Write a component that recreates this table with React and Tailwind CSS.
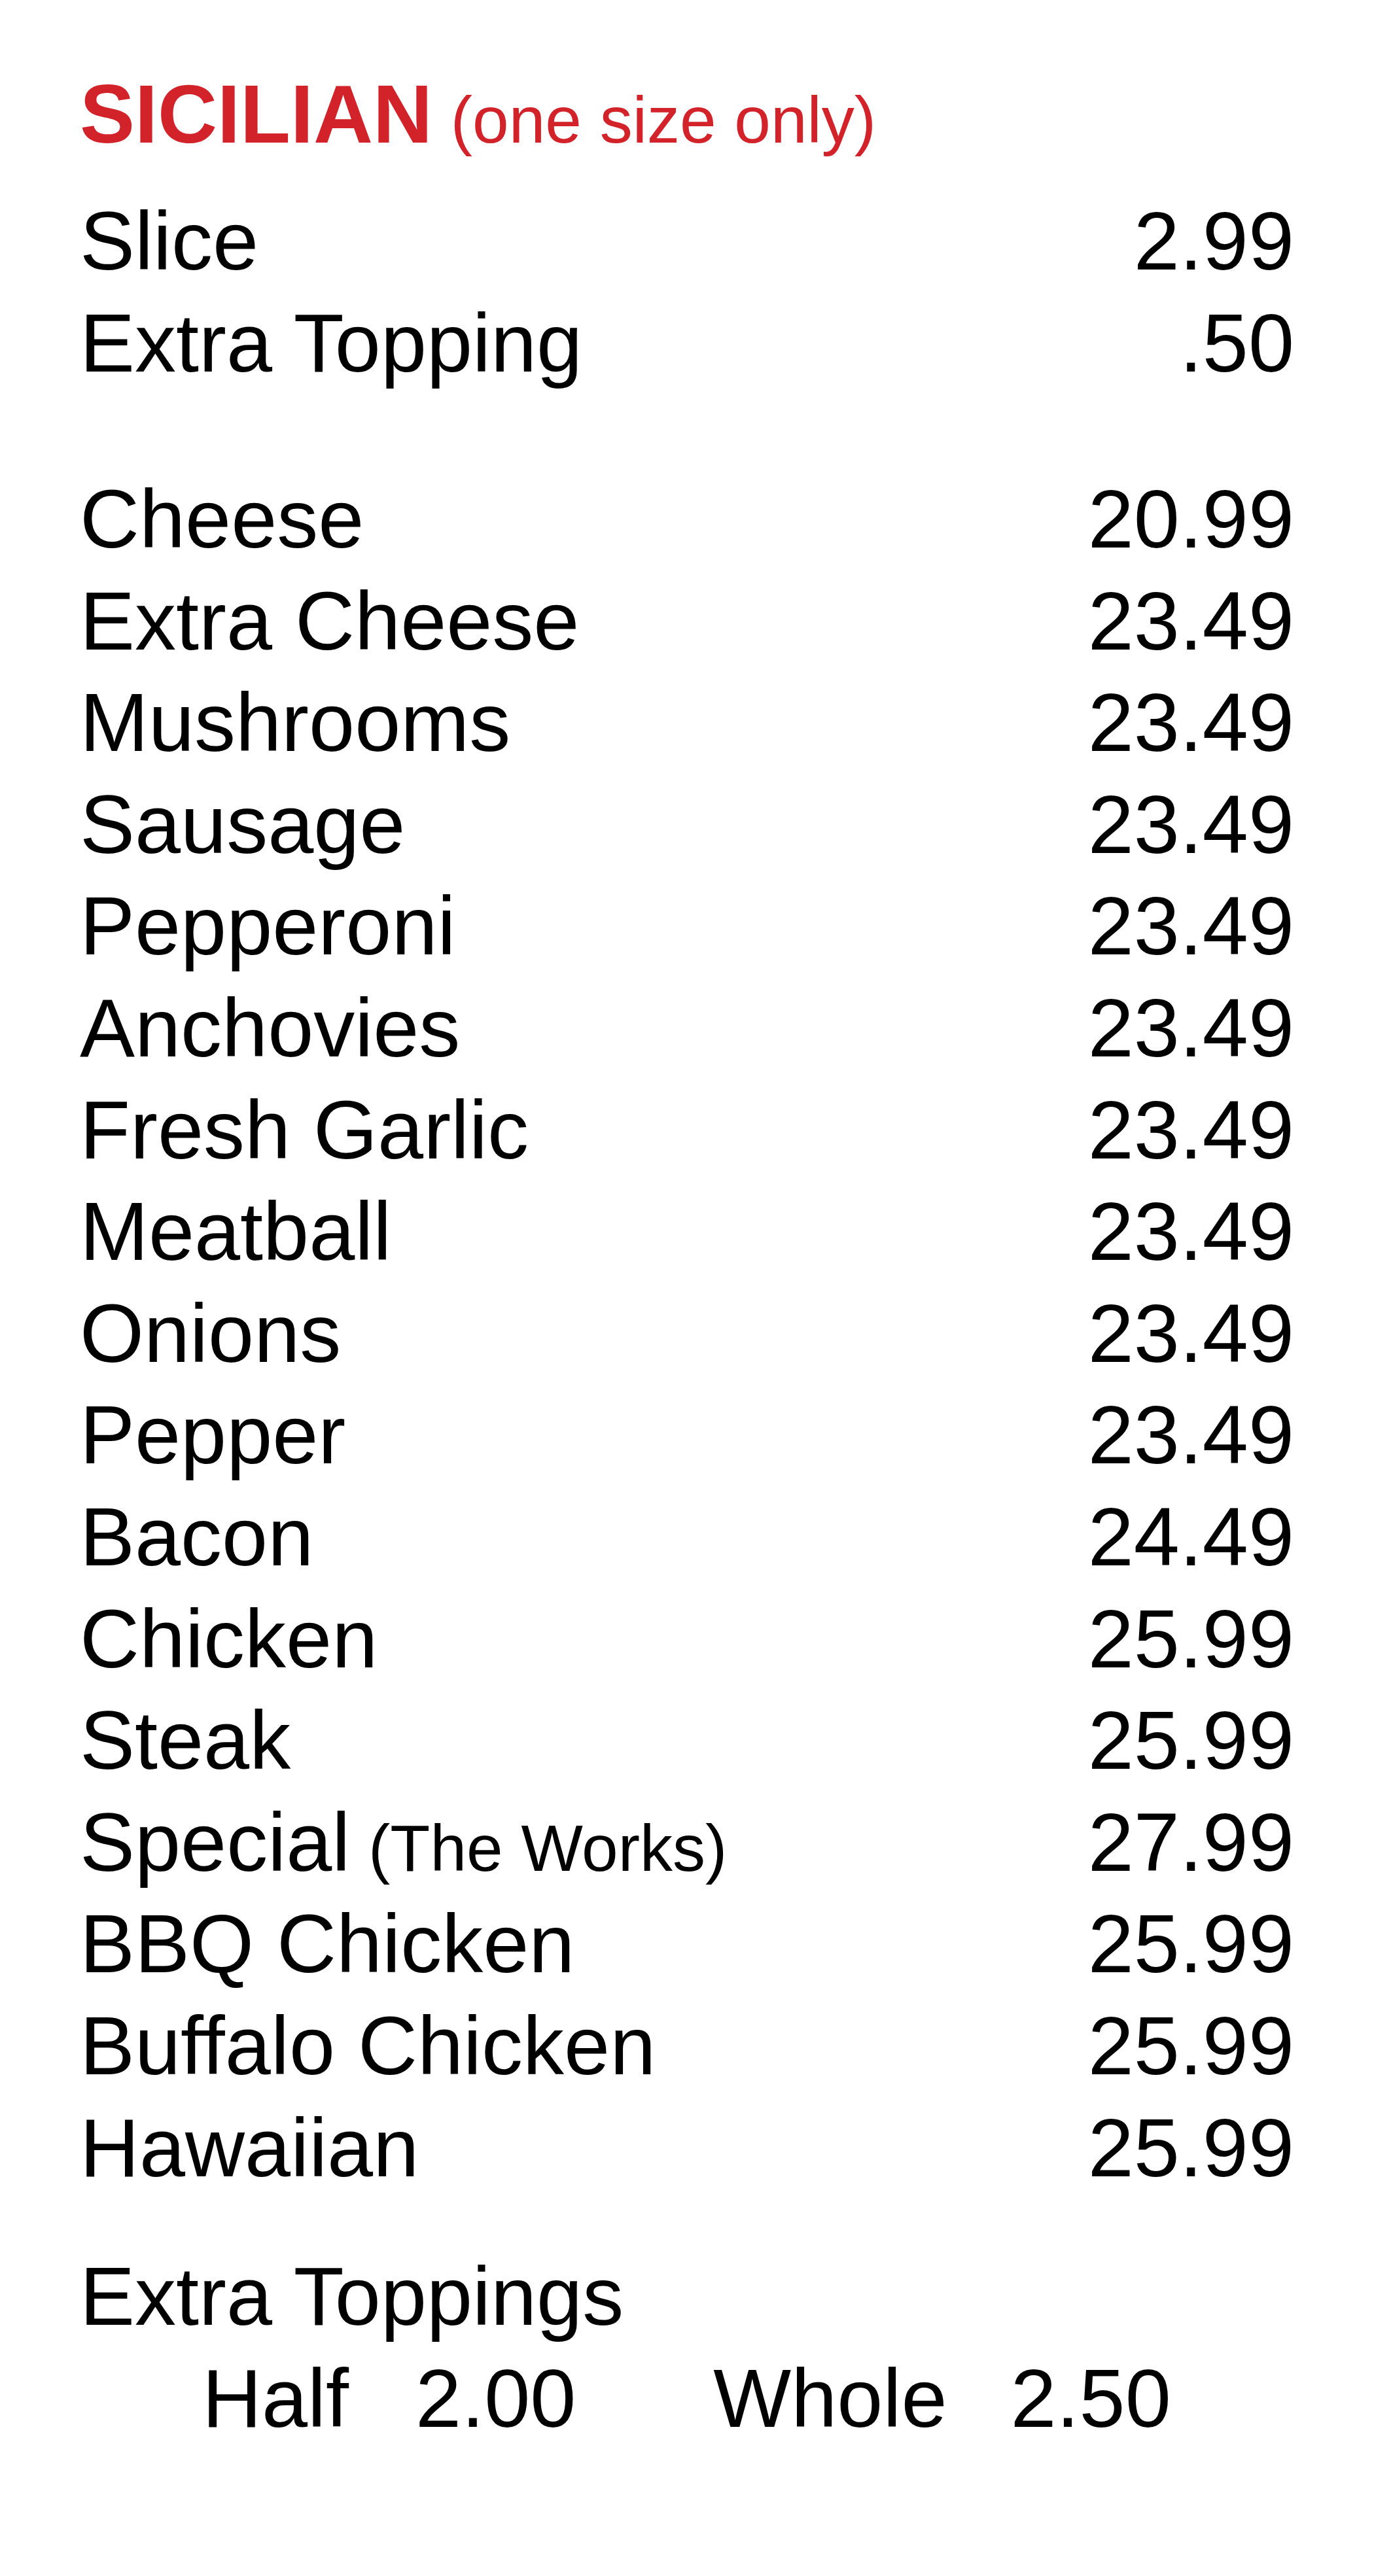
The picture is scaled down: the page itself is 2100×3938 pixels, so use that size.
const slices = [
  { name: 'Slice', price: '2.99' },
  { name: 'Extra Topping', price: '.50' },
];

const pies = [
  { name: 'Cheese', price: '20.99' },
  { name: 'Extra Cheese', price: '23.49' },
  { name: 'Mushrooms', price: '23.49' },
  { name: 'Sausage', price: '23.49' },
  { name: 'Pepperoni', price: '23.49' },
  { name: 'Anchovies', price: '23.49' },
  { name: 'Fresh Garlic', price: '23.49' },
  { name: 'Meatball', price: '23.49' },
  { name: 'Onions', price: '23.49' },
  { name: 'Pepper', price: '23.49' },
  { name: 'Bacon', price: '24.49' },
  { name: 'Chicken', price: '25.99' },
  { name: 'Steak', price: '25.99' },
  { name: 'Special', note: '(The Works)', price: '27.99' },
  { name: 'BBQ Chicken', price: '25.99' },
  { name: 'Buffalo Chicken', price: '25.99' },
  { name: 'Hawaiian', price: '25.99' },
];

function Row({ item }) {
  return (
    <div className="flex items-baseline justify-between leading-[155.6px]">
      <span>
        {item.name}
        {item.note && <span className="text-[100px] leading-none"> {item.note}</span>}
      </span>
      <span>{item.price}</span>
    </div>
  );
}

export default function App() {
  return (
    <div
      className="min-h-[3938px] w-[2100px] bg-white px-[122px] pt-[97px] pb-[186px] text-[126px] text-black"
      style={{ fontFamily: '"Liberation Sans", Arial, sans-serif' }}
    >
      <h1 className="leading-[156px] text-[#d2232a]">
        <span className="font-bold">SICILIAN</span>
        <span className="text-[100px] font-normal leading-none"> (one size only)</span>
      </h1>

      <div className="mt-[38px]">
        {slices.map((item) => (
          <div key={item.name} className="flex items-baseline justify-between leading-[156px]">
            <span>{item.name}</span>
            <span>{item.price}</span>
          </div>
        ))}
      </div>

      <div className="mt-[113px]">
        {pies.map((item) => (
          <Row key={item.name} item={item} />
        ))}
      </div>

      <div className="mt-[72px] leading-[156px]">
        <div>Extra Toppings</div>
        <div className="flex items-baseline pl-[187px]">
          <span>Half</span>
          <span className="ml-[102px]">2.00</span>
          <span className="ml-[210px]">Whole</span>
          <span className="ml-[97px]">2.50</span>
        </div>
      </div>
    </div>
  );
}
